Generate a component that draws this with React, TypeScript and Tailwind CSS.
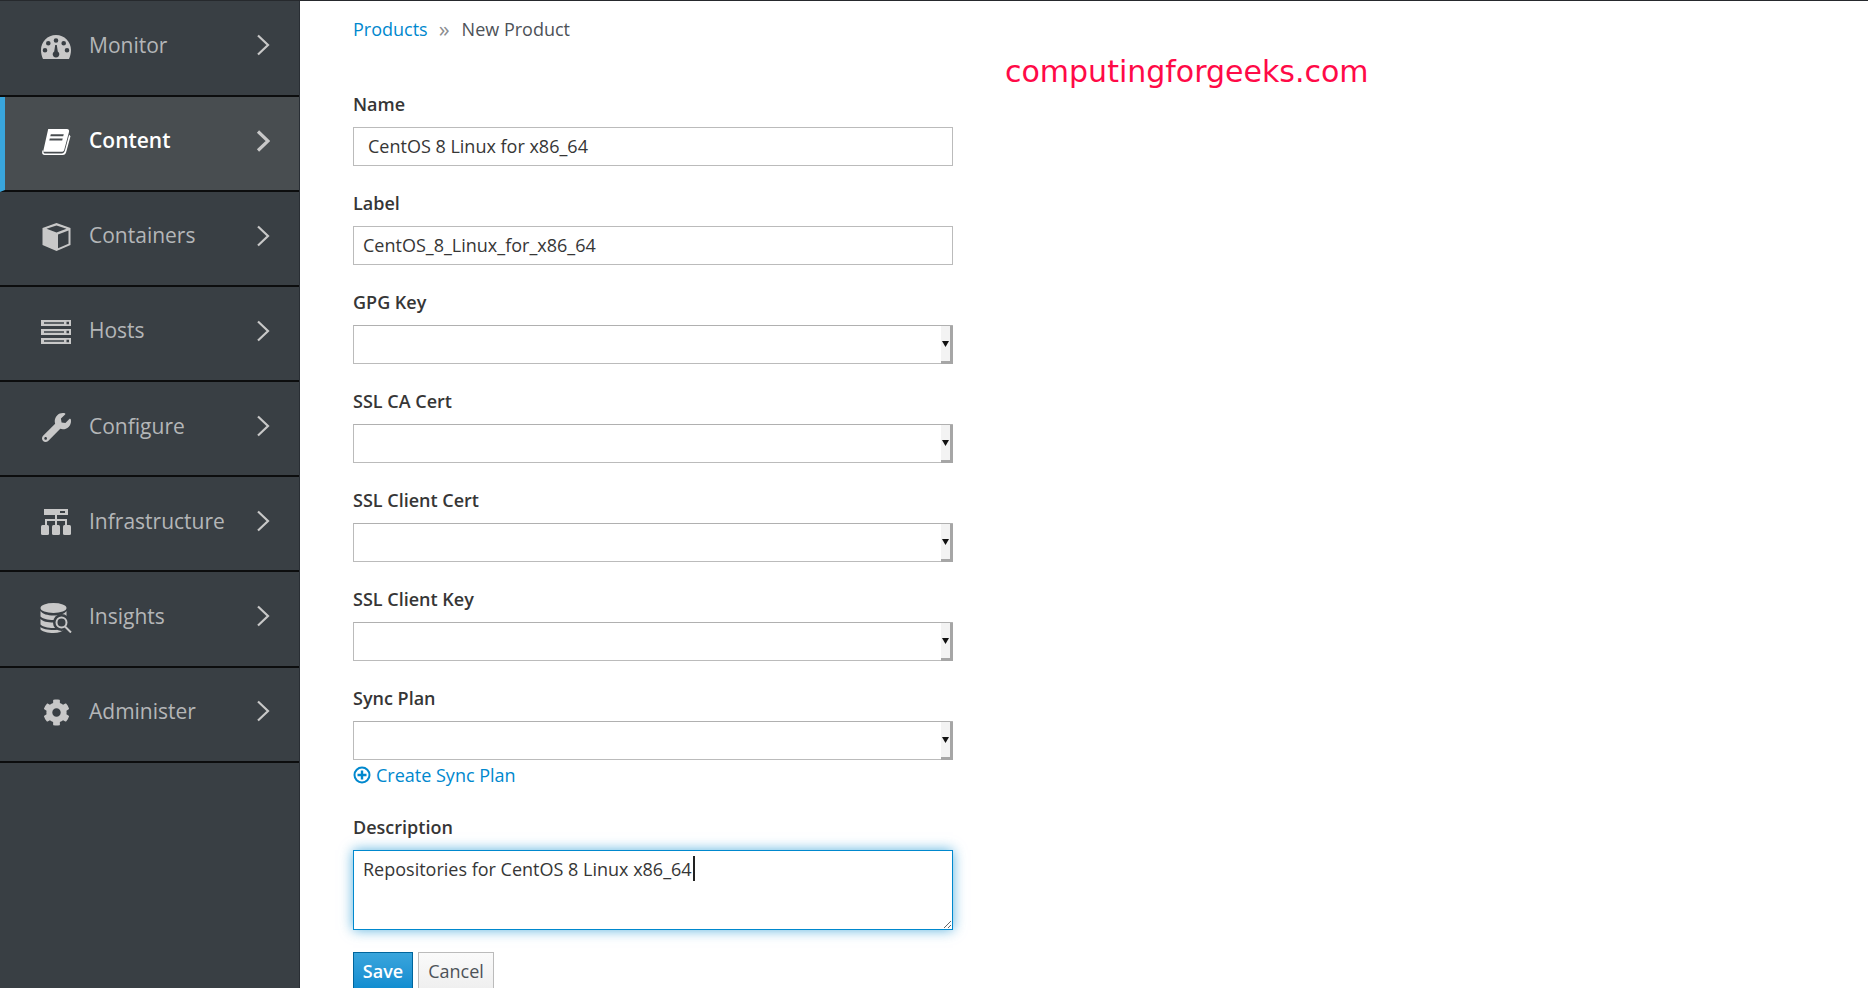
import React from 'react';
import { FaCog, FaWrench } from 'react-icons/fa';

const font = "font-['Open_Sans',sans-serif]";

// ── Sidebar icons ────────────────────────────────────────────
const GaugeIcon = () => (
    <svg viewBox="1 1 30 24" className="shrink-0 w-[30px] h-[24px]" fill="currentColor">
        <path fillRule="evenodd" d="M16 1C7.500 1 1 7.800 1 16c0 3.300.8 6.400 2 9h26c1.200-2.600 2-5.700 2-9C31 7.800 24.500 1 16 1zM16 4.200a2.300 2.300 0 1 1 0 4.600 2.300 2.300 0 0 1 0-4.600zM8.300 7a2.300 2.300 0 1 1 0 4.600 2.300 2.300 0 0 1 0-4.600zM23.700 7a2.300 2.300 0 1 1 0 4.600 2.300 2.300 0 0 1 0-4.600zM5 14a2.300 2.300 0 1 1 0 4.600A2.300 2.300 0 0 1 5 14zM27 14a2.300 2.300 0 1 1 0 4.600 2.300 2.300 0 0 1 0-4.600zM16.800 11l1 6.500a3.300 3.300 0 1 1-3.600 0L15.200 11z" />
    </svg>
);

const BookIcon = () => (
    <svg viewBox="2 1 28 25" className="shrink-0 w-[29px] h-[26px]" fill="currentColor">
        <path fillRule="evenodd" d="M8 1h18c2 0 2.500 1.500 2 3l-4.500 17c-.4 1.500-1.300 2-2.500 2H5c-1.500 0-2-1-1.500-2L8 1zM10.500 6l-.5 2h12.500l.5-2zM9.500 10l-.5 2h12.500l.5-2z" />
        <path d="M2.500 21.500c-.8 2.500-.4 4.500 2 4.500H22c2 0 2.800-1 3.300-2.500L29.500 8l-1.300-1.500-4 15c-.5 2-1.300 3-3.300 3H4.500c-1 0-1.200-1-.8-2.200z" />
    </svg>
);

const CubeIcon = () => (
    <svg viewBox="1 1 28 28" className="shrink-0 w-[29px] h-[28px]" fill="currentColor">
        <path fillRule="evenodd" d="M15 1L1 6v17l14 6 14-6V6L15 1zM15 3.500L25 6.800 15 10.500 5 6.800 15 3.500zM16.500 12.500L27 8.500v13.200l-10.500 4.500z" />
    </svg>
);

const ServerIcon = () => (
    <svg viewBox="0 0 30 24" className="shrink-0 w-[30px] h-[24px]" fill="currentColor">
        <path fillRule="evenodd" d="M0 0h30v6H0zM3 2.200v1.500h20V2.200zM25.500 1.700v2.500h2.500V1.700zM0 9h30v6H0zM3 11.200v1.500h20v-1.500zM25.500 10.700v2.500h2.500v-2.500zM0 18h30v6H0zM3 20.200v1.500h20v-1.500zM25.500 19.700v2.500h2.500v-2.500z" />
    </svg>
);

const NetworkIcon = () => (
    <svg viewBox="0 0 30 26" className="shrink-0 w-[30px] h-[26px]" fill="currentColor">
        <path fillRule="evenodd" d="M3 0h24v6H3zM19 2v2h5V2z" />
        <path d="M14 6h2v4h10v6h-2v-4H16v4h-2v-4H6v4H4v-6h10z" />
        <rect x="0" y="16" width="8" height="10" rx="1.500" />
        <rect x="11" y="16" width="8" height="10" rx="1.500" />
        <rect x="22" y="16" width="8" height="10" rx="1.500" />
    </svg>
);

const InsightsIcon = () => (
    <svg viewBox="0 0 32 30" className="shrink-0 w-[32px] h-[30px]" fill="currentColor">
        <ellipse cx="13.500" cy="5" rx="13" ry="5" />
        <path d="M.5 8c2 3 7 4.500 13 4.500S24.500 11 26.500 8v5.500c-2 2-7 3.500-13 3.500S2.500 15.500.5 13.500z" />
        <path d="M.5 16c2 2.500 7 3.500 13 3.500s11-1 13-3.500v5.500c-2 2-7 3.500-13 3.500S2.500 23.500.5 21.500z" />
        <path d="M.5 24c2 2 7 3 13 3s9-1 11-2v1c-2 2.500-6 4-11 4-6 0-11-1.500-13-3.500z" />
        <circle cx="21.500" cy="19.500" r="8.500" fill="#393f44" />
        <circle cx="21.500" cy="19.500" r="5" fill="none" stroke="currentColor" strokeWidth="2" />
        <path d="M25 23.500l6 6" stroke="currentColor" strokeWidth="2" />
    </svg>
);

interface NavItem {
    label: string;
    icon: React.ReactNode;
    active?: boolean;
}

const NAV_ITEMS: NavItem[] = [
    { label: 'Monitor', icon: <GaugeIcon /> },
    { label: 'Content', icon: <BookIcon />, active: true },
    { label: 'Containers', icon: <CubeIcon /> },
    { label: 'Hosts', icon: <ServerIcon /> },
    { label: 'Configure', icon: <FaWrench className="shrink-0 w-[29px] h-[29px]" /> },
    { label: 'Infrastructure', icon: <NetworkIcon /> },
    { label: 'Insights', icon: <InsightsIcon /> },
    { label: 'Administer', icon: <FaCog className="shrink-0 w-[27px] h-[27px]" /> },
];

const Sidebar = () => (
    <aside className="w-[300px] shrink-0 bg-[#393f44] border-r border-r-[#292e34]">
        {NAV_ITEMS.map((item, i) => (
            <div
                key={item.label}
                className={`flex items-center border-b-2 border-b-[#0c0d0e] ${i === 0 ? 'h-[96px]' : 'h-[95.1px]'} ${
                    item.active ? 'bg-[#484d50] border-l-[5px] border-l-[#39a5dc]' : ''
                }`}
            >
                <span className={`flex justify-center w-[30px] mb-[3px] ${item.active ? 'ml-[36px] text-white' : 'ml-[41px] text-[#c8c8c8]'}`}>
                    {item.icon}
                </span>
                <span className={`ml-[18px] mb-[5px] text-[21px] ${item.active ? 'text-white font-semibold' : 'text-[#b4b6b8]'}`}>
                    {item.label}
                </span>
                <svg viewBox="0 0 14 22" className="ml-auto mr-[29px] mb-[6px] w-[14px] h-[22px] text-[#c8c8c8]" fill="none" stroke="currentColor" strokeWidth={item.active ? 3.2 : 2.2}>
                    <path d="M2 1.500l10 9.500-10 9.500" />
                </svg>
            </div>
        ))}
    </aside>
);

// ── Form fields ──────────────────────────────────────────────
const FieldLabel = ({ children }: { children: React.ReactNode }) => (
    <label className="block text-[18px] leading-[24px] font-semibold text-[#363636] mb-[11px]">{children}</label>
);

const TextField = ({ label, value, indent }: { label: string; value: string; indent: string }) => (
    <div className="mb-[25px]">
        <FieldLabel>{label}</FieldLabel>
        <div className={`h-[39px] border border-[#bbbbbb] flex items-center text-[18px] text-[#363636] ${indent}`}>{value}</div>
    </div>
);

const SelectField = ({ label }: { label: string }) => (
    <div className="mb-[25px]">
        <FieldLabel>{label}</FieldLabel>
        <SelectBox />
    </div>
);

const SelectBox = () => (
    <div className="relative h-[39px] border border-[#bbbbbb] border-t-[#b0b0b0]">
        <div className="absolute right-[-1px] top-0 bottom-[-1px] w-[12px] bg-[#f3f3f3] border-r-[3px] border-b-[3px] border-r-[#a6a6a6] border-b-[#a6a6a6]">
            <svg viewBox="0 0 7 6" className="absolute left-[1px] top-[15px] w-[7px] h-[6px]" fill="#111">
                <path d="M0 0h7L3.500 6z" />
            </svg>
        </div>
    </div>
);

export default function App() {
    return (
        <div className={`${font} w-[1868px] h-[988px] overflow-hidden bg-white border-t border-t-[#26292d] flex`}>
            <Sidebar />
            <main className="relative flex-1 pl-[53px]">
                <div className="h-[42px] flex items-center mt-[7px] text-[18px]">
                    <a className="text-[#0088ce]">Products</a>
                    <span className="ml-[11px] mr-[12px] mb-[2px] text-[#8b8d8f] text-[22px] leading-[24px]">»</span>
                    <span className="text-[#4d5258]">New Product</span>
                </div>
                <div className="absolute left-[705px] top-[51px] font-['DejaVu_Sans',sans-serif] text-[30px] leading-[40px] text-[#ff0a47]">
                    computingforgeeks.com
                </div>

                <form className="w-[600px] mt-[42px]">
                    <TextField label="Name" value="CentOS 8 Linux for x86_64" indent="pl-[14px]" />
                    <TextField label="Label" value="CentOS_8_Linux_for_x86_64" indent="pl-[9px]" />
                    <SelectField label="GPG Key" />
                    <SelectField label="SSL CA Cert" />
                    <SelectField label="SSL Client Cert" />
                    <SelectField label="SSL Client Key" />
                    <div className="mb-[28px]">
                        <FieldLabel>Sync Plan</FieldLabel>
                        <SelectBox />
                        <a className="flex items-center h-[24px] mt-[3px] text-[18px] text-[#0088ce]">
                            <svg viewBox="0 0 18 18" className="w-[18px] h-[18px] mr-[5px]" fill="none" stroke="currentColor">
                                <circle cx="9" cy="9" r="7.500" strokeWidth="2" />
                                <path d="M9 4.500v9M4.500 9h9" strokeWidth="2.400" />
                            </svg>
                            Create Sync Plan
                        </a>
                    </div>
                    <FieldLabel>Description</FieldLabel>
                    <div className="relative h-[80px]">
                        <textarea
                            readOnly
                            value="Repositories for CentOS 8 Linux x86_64"
                            className="block w-full h-full px-[9px] py-[6px] text-[18px] leading-[24px] text-[#363636] border border-[#0088ce] outline-none resize-y shadow-[0_0_12px_rgba(0,136,206,0.65)]"
                        />
                        <span className="absolute left-[340px] top-[6px] w-[2px] h-[25px] bg-[#222]" />
                    </div>
                    <div className="flex gap-[5px] mt-[22px]">
                        <button type="button" className="w-[60px] h-[44px] pb-[5px] text-[18px] font-semibold text-white border border-[#00659c] bg-gradient-to-b from-[#39a5dc] to-[#0088ce]">
                            Save
                        </button>
                        <button type="button" className="w-[76px] h-[44px] pb-[5px] text-[18px] text-[#4d5258] border border-[#bbb] bg-gradient-to-b from-[#fafafa] to-[#ededed]">
                            Cancel
                        </button>
                    </div>
                </form>
            </main>
        </div>
    );
}
